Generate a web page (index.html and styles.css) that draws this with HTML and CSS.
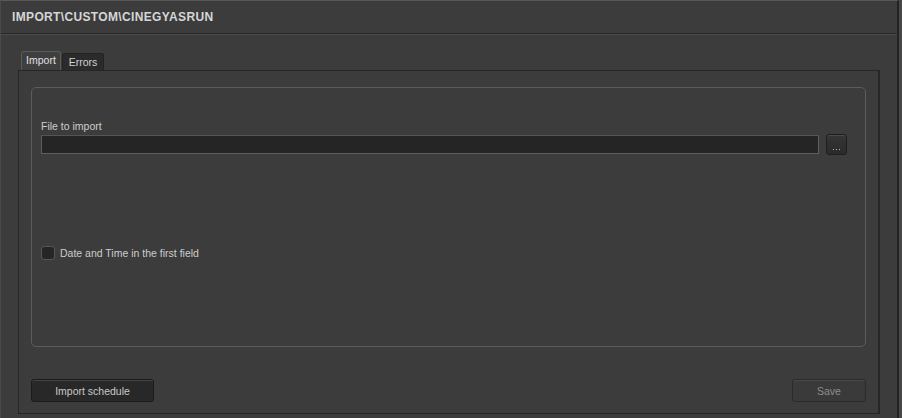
FILE: index.html
```html
<!DOCTYPE html>
<html>
<head>
<meta charset="utf-8">
<link rel="stylesheet" href="styles.css">
</head>
<body>
<div class="window">
  <div class="header"><span class="title">IMPORT\CUSTOM\CINEGYASRUN</span></div>
  <div class="content">
    <div class="tabs">
      <div class="tab active">Import</div>
      <div class="tab">Errors</div>
    </div>
    <div class="panel">
      <div class="group">
        <div class="field-label">File to import</div>
        <div class="file-row">
          <div class="input"></div>
          <button class="browse" aria-label="..."><svg width="7" height="1" viewBox="0 0 7 1"><rect x="0" y="0" width="1" height="1" fill="#b8b8b8"/><rect x="3" y="0" width="1" height="1" fill="#b8b8b8"/><rect x="6" y="0" width="1" height="1" fill="#b8b8b8"/></svg></button>
        </div>
        <label class="check"><span class="box"></span><span>Date and Time in the first field</span></label>
      </div>
      <div class="actions">
        <button class="btn primary">Import schedule</button>
        <button class="btn disabled">Save</button>
      </div>
    </div>
  </div>
</div>
</body>
</html>
```
FILE: styles.css
```css
* { box-sizing: border-box; }
html, body { margin: 0; padding: 0; }
body {
  width: 902px;
  height: 418px;
  background: #474747;
  font-family: "Liberation Sans", Arial, sans-serif;
  font-size: 10.5px;
  color: #cfcfcf;
  overflow: hidden;
}
.window {
  width: 899px;
  height: 418px;
  background: #3c3c3c;
  border-top: 1px solid #585858;
  border-left: 1px solid #4a4a4a;
  border-right: 2px solid #232323;
  display: flex;
  flex-direction: column;
}
.header {
  height: 33px;
  padding-left: 11px;
  line-height: 33px;
  border-bottom: 1px solid #262626;
}
.title {
  font-weight: bold;
  font-size: 12px;
  letter-spacing: 0.35px;
  color: #d6d6d6;
}
.content {
  flex: 1;
  border-top: 1px solid #4c4c4c;
  padding: 16px 17px 4px 17px;
  display: flex;
  flex-direction: column;
}
.tabs {
  display: flex;
  align-items: flex-end;
  height: 19px;
  padding-left: 3px;
}
.tab {
  height: 17px;
  width: 42px;
  margin-left: 1px;
  background: #2b2b2b;
  border: 1px solid #232323;
  border-bottom: none;
  border-radius: 3px 3px 0 0;
  text-align: center;
  line-height: 17px;
  color: #d2d2d2;
}
.tab.active {
  height: 19px;
  width: 40px;
  margin-left: 0;
  background: #3f3f3f;
  border: 1px solid #5a5a5a;
  border-bottom: none;
  line-height: 17px;
  color: #e0e0e0;
}
.panel {
  flex: 1;
  border: 1px solid #262626;
  border-right-width: 2px;
  padding: 16px 12px 11px 12px;
  display: flex;
  flex-direction: column;
}
.group {
  height: 260px;
  border: 1px solid #5c5c5c;
  border-radius: 5px;
  padding: 32px 18px 0 9px;
}
.field-label {
  height: 13px;
  line-height: 13px;
  margin-bottom: 2px;
  color: #cdcdcd;
}
.file-row {
  display: flex;
  gap: 7px;
  align-items: flex-start;
}
.input {
  flex: 1;
  height: 19px;
  background: #252525;
  border: 1px solid #5e5e5e;
  border-top-color: #555;
}
.browse {
  width: 21px;
  height: 21px;
  margin-top: -1px;
  padding: 0 0 4px 0;
  display: flex;
  align-items: flex-end;
  justify-content: center;
  background: linear-gradient(#353535, #2a2a2a);
  border: 1px solid #1e1e1e;
  border-radius: 3px;
  box-shadow: inset 0 1px 0 #4a4a4a;
}
.browse svg { display: block; }
.check {
  display: flex;
  align-items: center;
  gap: 5px;
  margin-top: 91px;
  color: #cdcdcd;
  height: 14px;
  line-height: 14px;
}
.box {
  width: 14px;
  height: 14px;
  background: #262626;
  border: 1px solid #575757;
  border-radius: 3px;
}
.actions {
  margin-top: auto;
  display: flex;
  justify-content: space-between;
}
.btn {
  height: 23px;
  border-radius: 3px;
  font-family: "Liberation Sans", Arial, sans-serif;
  font-size: 10.5px;
  padding: 0;
}
.btn.primary {
  width: 123px;
  background: #282828;
  border: 1px solid #1a1a1a;
  box-shadow: inset 0 1px 0 #454545;
  color: #c8c8c8;
}
.btn.disabled {
  width: 74px;
  background: #3a3a3a;
  border: 1px solid #2a2a2a;
  box-shadow: inset 0 1px 0 #4a4a4a;
  color: #8e8e8e;
}
```
